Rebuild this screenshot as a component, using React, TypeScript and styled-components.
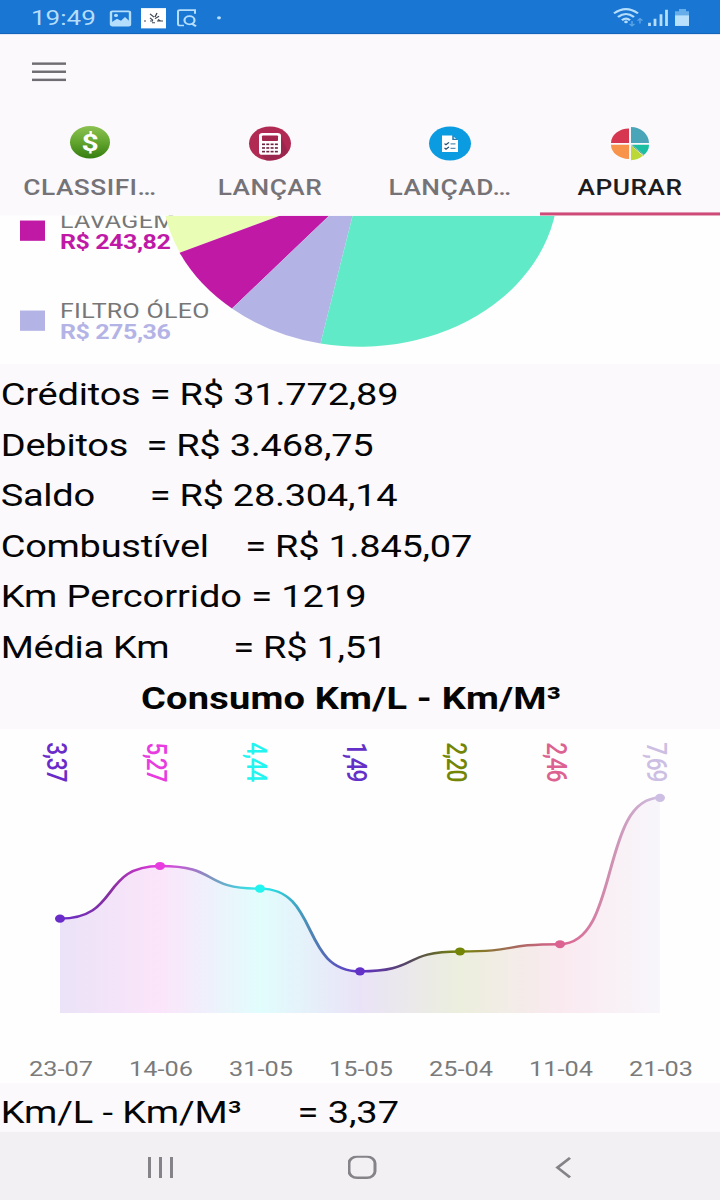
import React from 'react';
import styled, { createGlobalStyle } from 'styled-components';

const GlobalStyle = createGlobalStyle`
  * { box-sizing: border-box; }
  body { margin: 0; background: #fbf9fc; }
`;

/* The phone's 720x1480 screen is shown in a 720x1200 viewport. */
const Viewport = styled.div`
  width: 720px;
  height: 1200px;
  overflow: hidden;
`;

const Screen = styled.div`
  width: 720px;
  height: 1480px;
  display: flex;
  flex-direction: column;
  background: #fbf9fc;
  font-family: Roboto, sans-serif;
  transform: scaleY(0.810811);
  transform-origin: 0 0;
`;

const StatusBar = styled.header`
  height: 42px;
  padding: 0 28px 0 31px;
  display: flex;
  justify-content: space-between;
  align-items: center;
  background: #1976d2;
  border-bottom: 1px solid #1260b5;
  color: #b4defc;
`;

const StatusGroup = styled.div`
  display: flex;
  align-items: center;
`;

const Clock = styled.span`
  font-size: 26px;
  line-height: 40px;
  width: 78px;
  padding-top: 2px;
`;

const Toolbar = styled.div`
  height: 108px;
  padding: 34.8px 32px 0;
`;

const MenuButton = styled.button`
  display: flex;
  flex-direction: column;
  justify-content: space-between;
  width: 34px;
  height: 23.5px;
  padding: 0;
  border: 0;
  background: none;
`;

const MenuLine = styled.span`
  height: 3.5px;
  background: #6f6d71;
`;

const Tabs = styled.nav`
  height: 116px;
  display: grid;
  grid-template-columns: repeat(4, 180px);
`;

const Tab = styled.div<{ $active?: boolean }>`
  display: flex;
  flex-direction: column;
  align-items: center;
  padding-top: 5px;
  border-bottom: 4px solid ${(p) => (p.$active ? '#cf4a76' : 'transparent')};
  color: ${(p) => (p.$active ? '#1d1c1e' : '#757377')};
`;

const TabLabel = styled.span`
  margin-top: 16px;
  font-size: 26.3px;
  font-weight: 500;
  line-height: 34px;
  letter-spacing: 0.5px;
  white-space: nowrap;
`;

const PieSection = styled.section`
  height: 183px;
  display: grid;
  overflow: hidden;
  background: #fefefe;
`;

const Legend = styled.div`
  grid-area: 1 / 1;
  display: flex;
  flex-direction: column;
  margin-top: -14px;
`;

const LegendItem = styled.div`
  height: 111px;
  padding-left: 20px;
  display: flex;
  gap: 15px;
`;

const Swatch = styled.span<{ $color: string }>`
  width: 25px;
  height: 25px;
  margin-top: 20px;
  background: ${(p) => p.$color};
`;

const LegendText = styled.div`
  display: flex;
  flex-direction: column;
  font-size: 25px;
  line-height: 26px;
  letter-spacing: 0.3px;
  color: #777;
  padding-top: 7.5px;
`;

const LegendValue = styled.span<{ $color: string }>`
  color: ${(p) => p.$color};
  font-weight: 700;
  letter-spacing: -0.45px;
`;

const PieDrawing = styled.svg`
  grid-area: 1 / 1;
`;

const Summary = styled.section`
  height: 449.5px;
  padding-top: 6px;
`;

const SummaryLine = styled.p<{ $tracking?: number }>`
  margin: 0;
  height: 62.5px;
  padding-left: 0.7px;
  font-size: 38px;
  line-height: 62.5px;
  letter-spacing: ${(p) => p.$tracking ?? 0}px;
  color: #050505;
  white-space: pre;
`;

const ChartTitle = styled(SummaryLine)`
  padding-left: 141px;
  font-weight: 700;
`;

const Chart = styled.svg`
  display: block;
  flex: none;
  background: #fefefe;
`;

const Footer = styled.div`
  height: 60px;
  padding-top: 4.5px;
`;

const NavBar = styled.footer`
  height: 84px;
  background: #f2f0f3;
  display: flex;
  align-items: center;
  padding: 4px 0 0 146px;
  gap: 172px;
`;

const summary = [
  { text: 'Créditos = R$ 31.772,89', tracking: -0.2 },
  { text: 'Debitos  = R$ 3.468,75', tracking: -0.24 },
  { text: 'Saldo      = R$ 28.304,14', tracking: -0.28 },
  { text: 'Combustível    = R$ 1.845,07', tracking: -0.27 },
  { text: 'Km Percorrido = 1219', tracking: -0.08 },
  { text: 'Média Km       = R$ 1,51', tracking: -0.28 },
];

const points = [
  { y: 234, value: '3,37', date: '23-07', color: '#6a2cc9', blend: '#86309f' },
  { y: 169, value: '5,27', date: '14-06', color: '#e83be0', blend: '#8292bd' },
  { y: 197, value: '4,44', date: '31-05', color: '#22f4f0', blend: '#4d86b4' },
  { y: 299, value: '1,49', date: '15-05', color: '#6330c8', blend: '#55485e' },
  { y: 274.5, value: '2,20', date: '25-04', color: '#738505', blend: '#a06a58' },
  { y: 265.5, value: '2,46', date: '11-04', color: '#dc6391', blend: '#cf8fb0' },
  { y: 85, value: '7,69', date: '21-03', color: '#cdbfe3', blend: '#cdbfe3' },
];

const px = (i: number) => 60 + i * 100;
const curve = points
  .map((p, i) =>
    i === 0
      ? `M60 ${p.y}`
      : `C${px(i - 1) + 60} ${points[i - 1].y} ${px(i) - 60} ${p.y} ${px(i)} ${p.y}`
  )
  .join(' ');

const DollarIcon = () => (
  <svg width="44" height="44" viewBox="0 0 44 44">
    <defs>
      <linearGradient id="green" x1="0" y1="0" x2="0" y2="1">
        <stop offset="0" stopColor="#8cc152" />
        <stop offset="0.5" stopColor="#62a52e" />
        <stop offset="1" stopColor="#357d10" />
      </linearGradient>
    </defs>
    <circle cx="22" cy="20.500" r="20" fill="url(#green)" />
    <text x="22" y="31.500" fontSize="30" fontWeight="700" fill="#fff" textAnchor="middle">$</text>
  </svg>
);

const CalculatorIcon = () => (
  <svg width="44" height="44" viewBox="0 0 44 44">
    <circle cx="22" cy="22" r="21" fill="#b02a53" />
    <path d="M33 14 L40 32 A21 21 0 0 1 18 42.600 L12 34Z" fill="#9c274e" />
    <rect x="11" y="9" width="22" height="27" rx="3.500" fill="#fff" />
    <rect x="14" y="12" width="16" height="7" rx="1" fill="#a3264c" />
    {[22, 26.500, 31].map((y) =>
      [14, 18.300, 22.600, 26.900].map((x) => (
        <rect key={`${x}-${y}`} x={x} y={y} width="3" height="2" fill="#6d2340" />
      ))
    )}
  </svg>
);

const ChecklistIcon = () => (
  <svg width="44" height="44" viewBox="0 0 44 44">
    <circle cx="22" cy="22" r="21" fill="#0b9be0" />
    <path d="M14 12H24L30 18V32.500H14Z" fill="#fff" />
    <path d="M25 12.500V17H29.500" fill="none" stroke="#2877a8" strokeWidth="1.500" />
    <path d="M16.500 22l1.500 1.500 3-3M16.500 27.500l1.500 1.500 3-3" fill="none" stroke="#234f70" strokeWidth="1.300" />
    <path d="M22.500 22.500h5M22.500 28h5" stroke="#5b93b8" strokeWidth="1.500" />
  </svg>
);

const PieIcon = () => (
  <svg width="44" height="44" viewBox="0 0 44 44">
    <path d="M21 21.500H3A18 18 0 0 1 21 3.500Z" fill="#d63650" />
    <path d="M23 21.500V1.500A18 20 0 0 1 41 21.500Z" fill="#4ba5b9" />
    <path d="M21 23.500V41A18 17.500 0 0 1 3 23.500Z" fill="#f7934a" />
    <path d="M24 23.500H41A18 18 0 0 1 36 36Z" fill="#1abfa2" />
    <path d="M23 24.500L35 37A18 18 0 0 1 23 42.500Z" fill="#bcd836" />
    <path d="M23.500 24L36 36.500" stroke="#2b7a66" strokeWidth="0.800" />
  </svg>
);

const tabs = [
  { label: 'CLASSIFI…', Icon: DollarIcon },
  { label: 'LANÇAR', Icon: CalculatorIcon },
  { label: 'LANÇAD…', Icon: ChecklistIcon },
  { label: 'APURAR', Icon: PieIcon, active: true },
];

const legend = [
  { name: 'LAVAGEM', value: 'R$ 243,82', color: '#c019a6' },
  { name: 'FILTRO ÓLEO', value: 'R$ 275,36', color: '#b3b3e6' },
];

export default function App() {
  return (
    <Viewport>
      <GlobalStyle />
      <Screen>
        <StatusBar>
          <StatusGroup>
            <Clock>19:49</Clock>
            <svg width="116" height="40" viewBox="0 0 116 40">
              <rect x="2" y="13" width="19" height="17.500" rx="1.500" fill="none" stroke="#b4defc" strokeWidth="2.400" />
              <circle cx="7" cy="18" r="2" fill="#b4defc" />
              <path d="M3 30V26L8 22L12 24.500L16 20L20 24.500V30Z" fill="#b4defc" />
              <rect x="32" y="9" width="25" height="25" fill="#fff" />
              <path d="M41 16l4 4m3-5l-2 5m4-1l-4 3m-5-1l3 3m5-1l3 2M35 25h2m4 0h3m4 0h6m-11 2h3" fill="none" stroke="#3f4857" strokeWidth="1.300" />
              <path d="M86 16V11.500H71Q69 11.500 69 13.500V28.500Q69 30.500 71 30.500H75" fill="none" stroke="#b4defc" strokeWidth="2" />
              <circle cx="80.500" cy="24" r="5" fill="none" stroke="#b4defc" strokeWidth="2.200" />
              <path d="M82.500 28l4.500 3.500" stroke="#b4defc" strokeWidth="2.400" />
              <circle cx="110" cy="21" r="2" fill="#b4defc" />
            </svg>
          </StatusGroup>
          <svg width="80" height="40" viewBox="0 0 80 40">
            <g fill="none" stroke="#b4defc" strokeWidth="2.400">
              <path d="M2 15.500Q14 5 26 15.500" />
              <path d="M6 20Q14 12.500 22 20" />
              <path d="M10 24Q14 20 18 24" />
            </g>
            <circle cx="14" cy="26" r="1.800" fill="#b4defc" />
            <path d="M20 25v6m-2.500-2.500L20 31l2.500-2.500M28 28v-6m-2.500 2.500L28 22l2.500 2.500" fill="none" stroke="#5aa5e6" strokeWidth="1.500" />
            <path d="M37.500 31V27M43 31V22M49 31V16.500M54.500 31V11" stroke="#b4defc" strokeWidth="2.800" />
            <path d="M63 13H67V10H74V13H77V19H63Z" fill="#67ade9" />
            <rect x="63" y="18" width="14" height="13" fill="#b9e1fc" />
          </svg>
        </StatusBar>

        <Toolbar>
          <MenuButton aria-label="Menu">
            <MenuLine />
            <MenuLine />
            <MenuLine />
          </MenuButton>
        </Toolbar>

        <Tabs>
          {tabs.map(({ label, Icon, active }) => (
            <Tab key={label} $active={active}>
              <Icon />
              <TabLabel>{label}</TabLabel>
            </Tab>
          ))}
        </Tabs>

        <PieSection>
          <Legend>
            {legend.map((item) => (
              <LegendItem key={item.name}>
                <Swatch $color={item.color} />
                <LegendText>
                  <span>{item.name}</span>
                  <LegendValue $color={item.color}>{item.value}</LegendValue>
                </LegendText>
              </LegendItem>
            ))}
          </Legend>
          <PieDrawing width="720" height="183" viewBox="0 266 720 183">
            <path d="M360 229.600L180 311.600A198 198 0 0 1 162 229.600Z" fill="#e9fdb4" />
            <path d="M360 229.600L232 380.400A198 198 0 0 1 179.600 311.600Z" fill="#c019a6" />
            <path d="M360 229.600L320.500 423.600A198 198 0 0 1 232 380.400Z" fill="#b3b3e6" />
            <path d="M360 229.600H558A198 198 0 0 1 320.500 423.600Z" fill="#60eac7" />
          </PieDrawing>
        </PieSection>

        <Summary>
          {summary.map((line) => (
            <SummaryLine key={line.text} $tracking={line.tracking}>
              {line.text}
            </SummaryLine>
          ))}
          <ChartTitle $tracking={0.2}>Consumo Km/L - Km/M³</ChartTitle>
        </Summary>

        <Chart width="720" height="437.500" viewBox="0 0 720 437.500">
          <defs>
            <linearGradient id="area" gradientUnits="userSpaceOnUse" x1="60" y1="0" x2="660" y2="0">
              {points.map((p, i) => (
                <stop key={p.date} offset={i / 6} stopColor={p.color} />
              ))}
            </linearGradient>
            <linearGradient id="line" gradientUnits="userSpaceOnUse" x1="60" y1="0" x2="660" y2="0">
              {points.map((p, i) => (
                <React.Fragment key={p.date}>
                  <stop offset={i / 6} stopColor={p.color} />
                  <stop offset={Math.min(1, (i + 0.5) / 6)} stopColor={p.blend} />
                </React.Fragment>
              ))}
            </linearGradient>
          </defs>
          <path d={`${curve}V350.500H60Z`} fill="url(#area)" opacity="0.130" />
          <path d={curve} fill="none" stroke="url(#line)" strokeWidth="3" />
          {points.map((p, i) => (
            <g key={p.date}>
              <circle cx={px(i)} cy={p.y} r="5" fill={p.color} />
              <text
                transform={`translate(${px(i) - 13} 16.500) rotate(90)`}
                fontSize="28"
                fontWeight="500"
                letterSpacing="-1.500"
                fill={p.color}
              >
                {p.value}
              </text>
              <text x={px(i) + 1} y="428" fontSize="25.300" fill="#7b7b7b" textAnchor="middle">
                {p.date}
              </text>
            </g>
          ))}
        </Chart>

        <Footer>
          <SummaryLine $tracking={-0.08}>{'Km/L - Km/M³      = 3,37'}</SummaryLine>
        </Footer>

        <NavBar>
          <svg width="30" height="30" viewBox="0 0 30 30">
            <path d="M3.500 2V28M14.500 2V28M25.500 2V28" stroke="#858388" strokeWidth="3" />
          </svg>
          <svg width="30" height="30" viewBox="0 0 30 30">
            <rect x="1" y="1.500" width="26" height="26" rx="8" fill="none" stroke="#858388" strokeWidth="3" />
          </svg>
          <svg width="30" height="30" viewBox="0 0 30 30">
            <path d="M20 3L7.500 15L20 27" fill="none" stroke="#858388" strokeWidth="3" />
          </svg>
        </NavBar>
      </Screen>
    </Viewport>
  );
}
